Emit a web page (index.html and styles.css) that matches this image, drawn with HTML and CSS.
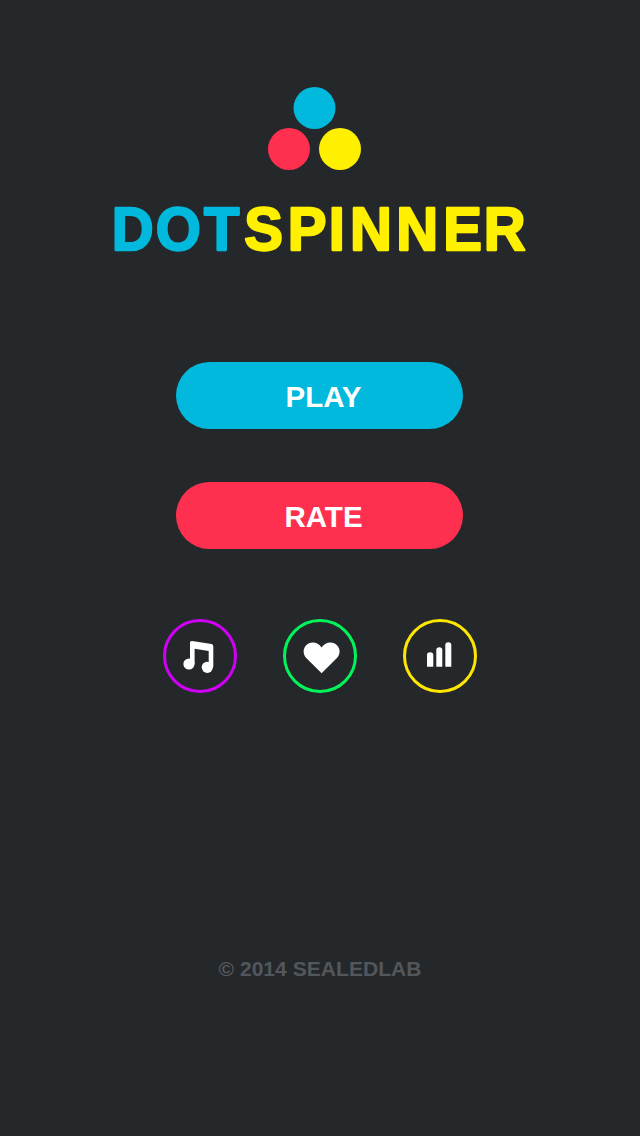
FILE: index.html
```html
<!DOCTYPE html>
<html lang="en">
<head>
    <meta charset="UTF-8">
    <meta name="viewport" content="width=device-width, initial-scale=1.0">
    <title>Dot Spinner</title>
    <link rel="stylesheet" href="styles.css">
</head>
<body>
    <div class="screen">
        <svg class="logo" width="94" height="84" viewBox="0 0 94 84">
            <circle cx="46.500" cy="21" r="21" fill="#00b9dc"/>
            <circle cx="21" cy="62" r="21" fill="#ff304f"/>
            <circle cx="72" cy="62" r="21" fill="#fff000"/>
        </svg>
        <svg class="title" width="640" height="90" viewBox="0 0 640 90">
            <text y="75.600" transform="scale(1 1.040)"><tspan class="title-dot" x="111.850 155.750 204">DOT</tspan><tspan class="title-spinner" x="244.350 287.650 328.650 350.050 396.350 443.250 483.750">SPINNER</tspan></text>
        </svg>

        <div class="menu">
            <button class="btn btn-play" type="button">PLAY</button>
            <button class="btn btn-rate" type="button">RATE</button>
        </div>

        <div class="icons">
            <button class="round round-music" type="button" aria-label="Music">
                <svg width="34" height="34" viewBox="0 0 34 34">
                    <circle cx="6" cy="25" r="5.600" fill="#fff"/>
                    <circle cx="24.300" cy="28.300" r="5.600" fill="#fff"/>
                    <path d="M7 25V3.500Q7 1.800 9 2L28.500 5Q30.300 5.300 30.300 7.500V28H25.700V12L11.600 9.700V25Z" fill="#fff"/>
                </svg>
            </button>
            <button class="round round-heart" type="button" aria-label="Favourite">
                <svg width="40" height="40" viewBox="0 0 40 40">
                    <path d="M21.600 37.300L6.500 22.300C2.500 18 3 12.500 6 9.500C9.500 5.500 17.500 5 21.600 11.500C25.700 5 33.700 5.500 37.200 9.500C40.200 12.500 40.700 18 36.700 22.300Z" fill="#fff"/>
                </svg>
            </button>
            <button class="round round-stats" type="button" aria-label="Scores">
                <svg width="34" height="34" viewBox="0 0 34 34">
                    <path d="M4 27.700V16Q4 13.300 7.100 13.300Q10.300 13.300 10.300 16V27.700Z" fill="#fff"/>
                    <path d="M13.300 27.700V11Q13.300 8.300 16.300 8.300Q19.300 8.300 19.300 11V27.700Z" fill="#fff"/>
                    <path d="M22.300 27.700V6Q22.300 3.300 25.300 3.300Q28.300 3.300 28.300 6V27.700Z" fill="#fff"/>
                </svg>
            </button>
        </div>

        <p class="footer">© 2014 SEALEDLAB</p>
    </div>
</body>
</html>
```

FILE: styles.css
```css
html, body {
    margin: 0;
    padding: 0;
}
body {
    background-color: #24282b;
    font-family: "Liberation Sans", Arial, sans-serif;
}
.screen {
    height: 1136px;
    box-sizing: border-box;
    padding-top: 87px;
    display: flex;
    flex-direction: column;
    align-items: center;
    overflow: hidden;
}
.logo {
    display: block;
    margin-right: 10px;
}
.title {
    display: block;
    flex-shrink: 0;
    font-size: 58px;
    font-weight: bold;
    font-kerning: none;
    stroke-width: 2.200px;
    stroke-linejoin: round;
}
.title-dot {
    fill: #00b9dc;
    stroke: #00b9dc;
}
.title-spinner {
    fill: #fff000;
    stroke: #fff000;
}
.menu {
    margin-top: 101px;
    margin-right: 1px;
    display: flex;
    flex-direction: column;
    gap: 53px;
}
.btn {
    display: block;
    width: 287px;
    height: 67px;
    padding: 2px 0 0 8px;
    border: none;
    border-radius: 34px;
    color: white;
    font-family: inherit;
    font-size: 29.500px;
    font-weight: bold;
    cursor: pointer;
}
.btn-play {
    background-color: #00b9dc;
}
.btn-rate {
    background-color: #ff304f;
}
.icons {
    margin-top: 70px;
    display: flex;
    gap: 46px;
}
.round {
    width: 74px;
    height: 74px;
    padding: 0;
    box-sizing: border-box;
    border: 3px solid;
    border-radius: 50%;
    background: none;
    display: flex;
    align-items: center;
    justify-content: center;
    cursor: pointer;
}
.round-music {
    border-color: #d000f5;
}
.round-heart {
    border-color: #00f55a;
}
.round-stats {
    border-color: #ffe600;
}
.footer {
    margin: 264px 0 0;
    color: #53575c;
    font-size: 21px;
    line-height: 24px;
    font-weight: bold;
    letter-spacing: 0.050px;
}
```
